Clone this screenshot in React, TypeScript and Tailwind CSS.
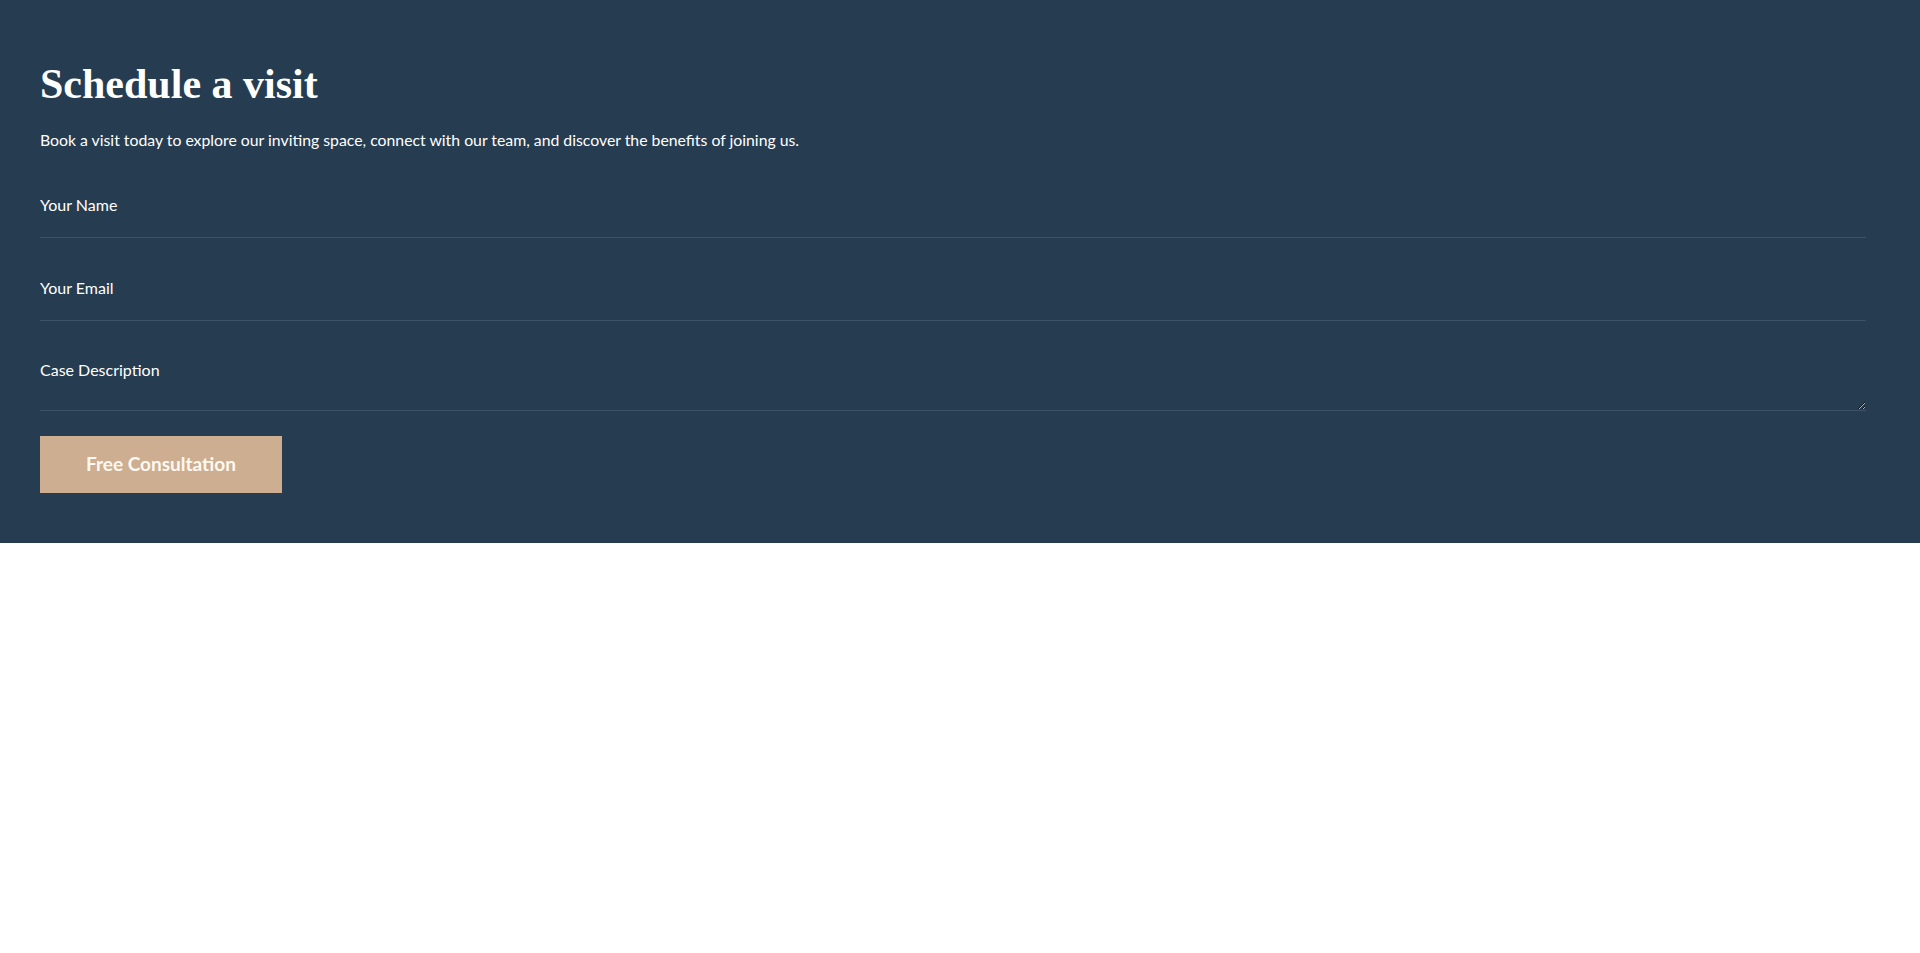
export default function App() {
  return (
    <div className="min-h-screen bg-white">
      <section className="bg-[#263c51] pl-10 pr-[54px] pt-[58px] pb-[50px] font-['Lato',sans-serif] text-white">
        <h2 className="font-['Liberation_Serif',serif] text-[42px] font-bold leading-[52px]">
          Schedule a visit
        </h2>
        <p className="mt-[18px] text-[15.8px] leading-6">
          Book a visit today to explore our inviting space, connect with our team, and discover the benefits of joining us.
        </p>
        <form className="mt-[21px] flex flex-col" onSubmit={(e) => e.preventDefault()}>
          <input
            type="text"
            placeholder="Your Name"
            className="h-[65px] border-b border-[#3b5268] bg-transparent pt-5 pb-[22px] text-[16px] text-white outline-none placeholder:text-white"
          />
          <input
            type="email"
            placeholder="Your Email"
            className="mt-[18px] h-[65px] border-b border-[#3b5268] bg-transparent pt-5 pb-[22px] text-[16px] text-white outline-none placeholder:text-white"
          />
          <textarea
            placeholder="Case Description"
            className="mt-[18px] h-[72px] border-b border-[#3b5268] bg-transparent py-5 text-[16px] leading-[22px] text-white outline-none placeholder:text-white"
          />
          <div className="mt-[25px]">
            <button
              type="submit"
              className="h-[57px] w-[242px] bg-[#cdae90] text-[19px] font-bold text-[#fdf8f0]"
            >
              Free Consultation
            </button>
          </div>
        </form>
      </section>
    </div>
  );
}
